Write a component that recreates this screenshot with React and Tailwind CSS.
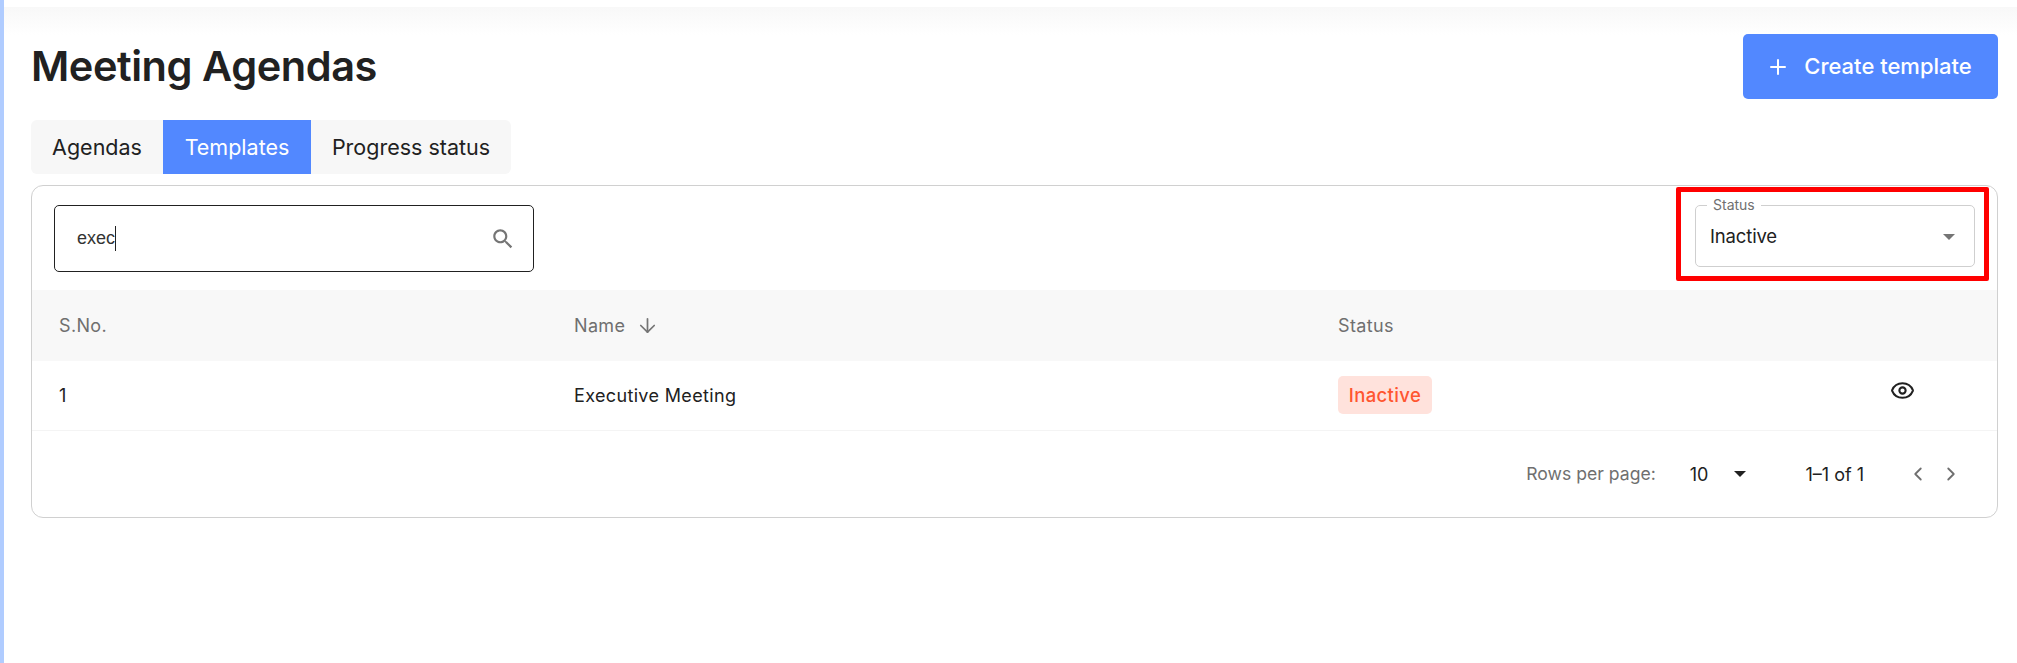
import { ChevronLeft, ChevronRight, Eye, Plus, ArrowDown } from "lucide-react";

const font = "font-['Inter','Liberation_Sans',sans-serif]";

function SearchIcon() {
  return (
    <svg width="26" height="26" viewBox="0 0 24 24" fill="#757575">
      <path d="M15.5 14h-.79l-.28-.27C15.41 12.59 16 11.11 16 9.5 16 5.91 13.09 3 9.5 3S3 5.91 3 9.5 5.91 16 9.5 16c1.61 0 3.09-.59 4.23-1.57l.27.28v.79l5 4.99L20.49 19l-4.99-5zm-6 0C7.01 14 5 11.99 5 9.5S7.01 5 9.5 5 14 7.01 14 9.5 11.99 14 9.5 14z" />
    </svg>
  );
}

function Tabs() {
  return (
    <div className="mt-[21px] flex h-[54px] w-fit overflow-hidden rounded-[6px] bg-[#f7f7f7] text-[21.5px] leading-[28px] text-[#212121]">
      <div className="flex w-[132px] items-center justify-center pb-[1px]">Agendas</div>
      <div className="flex w-[148px] items-center justify-center bg-[#5288ff] pb-[1px] text-white">Templates</div>
      <div className="flex w-[200px] items-center justify-center pb-[1px]">Progress status</div>
    </div>
  );
}

function Toolbar() {
  return (
    <div className="flex h-[104px] items-start justify-between pl-[22px] pr-[22px] pt-[19px]">
      <div className="flex h-[67px] w-[480px] items-center justify-between rounded-[5px] border border-[#212121] pl-[22px] pr-[17px]">
        <span className="flex items-center font-['Liberation_Sans',sans-serif] text-[18px] text-[#333]">
          exec
          <span className="h-[25px] w-px bg-[#212121]" />
        </span>
        <SearchIcon />
      </div>
      <div className="w-[280px]">
        <fieldset className="-mt-[8px] h-[70px] rounded-[5px] border border-[#cfcfcf] px-[11px]">
          <legend className="px-[6px] text-[14px] leading-[16px] text-[#707070]">Status</legend>
          <div className="flex h-[47px] items-center justify-between pl-[3px] pr-[8px] pt-[1px] text-[18.5px] tracking-[-0.15px] text-[#212121]">
            <span>Inactive</span>
            <span className="h-0 w-0 border-x-[6px] border-t-[6px] border-x-transparent border-t-[#757575]" />
          </div>
        </fieldset>
      </div>
    </div>
  );
}

function AgendaTable() {
  return (
    <table className="w-full table-fixed border-collapse text-[18px] tracking-[0.35px]">
      <colgroup>
        <col className="w-[515px]" />
        <col className="w-[764px]" />
        <col className="w-[579px]" />
        <col />
      </colgroup>
      <thead>
        <tr className="h-[71px] bg-[#f8f8f8] text-left text-[#6f6f6f]">
          <th className="pl-[27px] font-normal">S.No.</th>
          <th className="pl-[27px] font-normal">
            <span className="flex items-center gap-[11px]">
              Name
              <ArrowDown size={23} strokeWidth={1.8} className="text-[#757575]" />
            </span>
          </th>
          <th className="pl-[27px] font-normal">Status</th>
          <th />
        </tr>
      </thead>
      <tbody>
        <tr className="h-[69px] border-b border-[#f4f4f4] text-[#212121]">
          <td className="pl-[27px]">1</td>
          <td className="pl-[27px]">Executive Meeting</td>
          <td className="pl-[27px]">
            <span className="inline-flex h-[38px] w-[94px] items-center justify-center rounded-[5px] bg-[#ffe2dc] pt-[2px] text-[18.5px] font-medium text-[#ff5630]">
              Inactive
            </span>
          </td>
          <td className="pb-[10px]">
            <Eye size={25} strokeWidth={2} className="text-[#212121]" />
          </td>
        </tr>
      </tbody>
    </table>
  );
}

function Pagination() {
  return (
    <div className="flex h-[87px] items-center justify-end pr-[35px] text-[18px]">
      <span className="text-[17.6px] text-[#6f6f6f]">Rows per page:</span>
      <span className="ml-[34px] text-[#212121]">10</span>
      <span className="ml-[26px] h-0 w-0 border-x-[6px] border-t-[6px] border-x-transparent border-t-[#212121]" />
      <span className="ml-[59px] text-[#212121]">1–1 of 1</span>
      <span className="ml-[43px] flex gap-[11px] text-[#6f6f6f]">
        <ChevronLeft size={22} />
        <ChevronRight size={22} />
      </span>
    </div>
  );
}

export default function App() {
  return (
    <div className={`h-[663px] overflow-hidden border-l-4 border-[#b0ccff] bg-white ${font}`}>
      <div className="mt-[7px] h-[28px] bg-gradient-to-b from-[#f8f8f8] to-white" />
      <main className="relative -mt-[28px] pl-[27px] pr-[19px]">
        <div className="flex items-start justify-between pt-[27px]">
          <h1 className="mt-[7px] text-[41.5px] font-semibold leading-[50px] tracking-[-0.45px] text-[#212121]">Meeting Agendas</h1>
          <button className="flex h-[65px] w-[255px] items-center justify-center gap-[14px] rounded-[5px] bg-[#5288ff] pr-[3px] text-[22px] font-medium text-white">
            <Plus size={24} strokeWidth={2} />
            Create template
          </button>
        </div>
        <Tabs />
        <section className="mt-[11px] h-[333px] rounded-[12px] border border-[#d0d0d0]">
          <Toolbar />
          <AgendaTable />
          <Pagination />
        </section>
        <div className="absolute left-[1672px] top-[180px] h-[94px] w-[313px] rounded-[2px] border-[5px] border-[#ff0000]" />
      </main>
    </div>
  );
}
